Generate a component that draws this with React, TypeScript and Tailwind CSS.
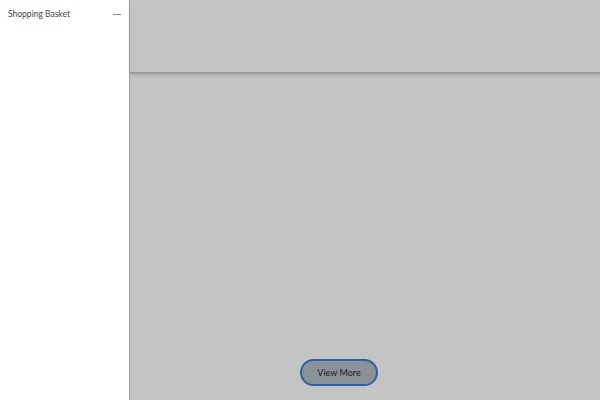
import React from 'react'

const App = () => {
    return (
        <div className="flex h-[400px] w-[600px] overflow-hidden font-['Lato',sans-serif]">
            {/* sidebar */}
            <aside className="w-[130px] shrink-0 bg-white border-r border-[#a3a3a3]">
                <div className="flex items-center justify-between pl-2 pr-[8px] pt-[8px]">
                    <span className="text-[8.5px] text-[#444]">Shopping Basket</span>
                    <span className="block h-px w-[8px] bg-[#888]" />
                </div>
            </aside>

            {/* main */}
            <main className="flex flex-1 flex-col bg-[#c4c4c4]">
                <div className="h-[74px] shrink-0 border-b-2 border-[#999] shadow-[0_2px_3px_rgba(0,0,0,0.12)]" />
                <div className="flex flex-1 items-end justify-center pr-[52px] pb-[14px]">
                    <button className="h-[27px] w-[78px] rounded-full border-2 border-[#2d5fa3] bg-[#8b9199] text-[9px] text-[#1a1a1a]">
                        View More
                    </button>
                </div>
            </main>
        </div>
    )
}

export default App
